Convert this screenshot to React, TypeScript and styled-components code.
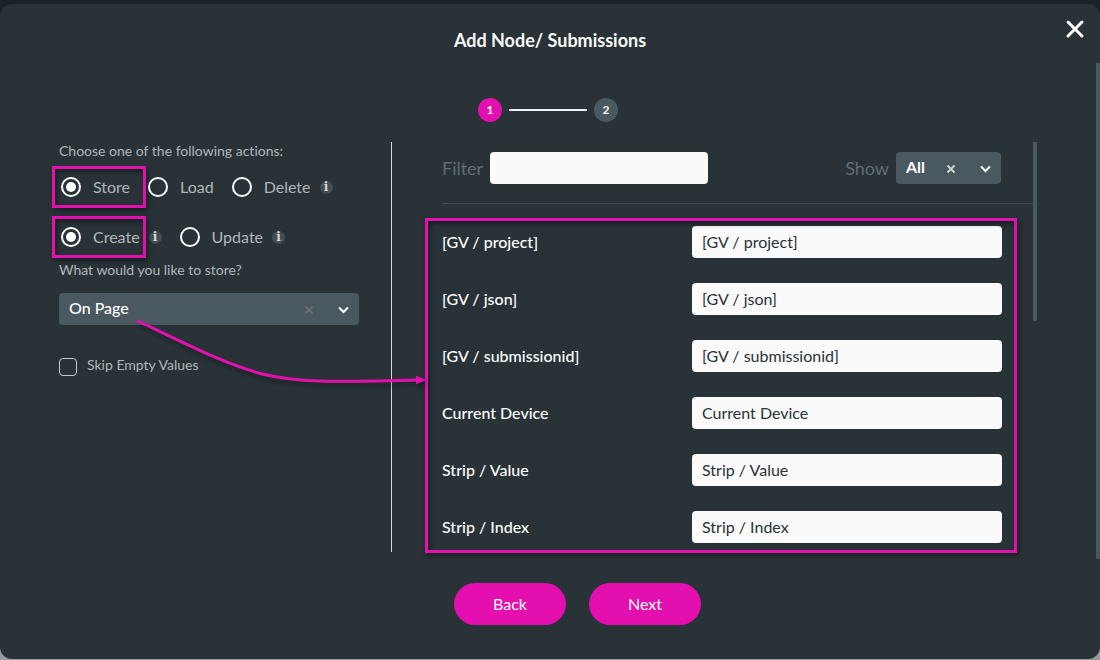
import React, { useState } from "react";
import styled, { createGlobalStyle, css } from "styled-components";

const pink = "#e310af";
const slate = "#4a585f";

const GlobalStyle = createGlobalStyle`
  *, *::before, *::after { box-sizing: border-box; }
  body {
    margin: 0;
    font-family: Lato, "Liberation Sans", sans-serif;
    font-size: 16px;
    line-height: 20px;
    font-variant-ligatures: none;
    background: linear-gradient(#1b2029 50%, #97999b 50%);
  }
  button, input, select { font: inherit; }
`;

const Page = styled.div`
  padding: 4px 0 1px;
`;

const Dialog = styled.main`
  position: relative;
  display: flex;
  flex-direction: column;
  background: #283237;
  border-radius: 12px;
  overflow: hidden;
`;

const Header = styled.header`
  display: flex;
  justify-content: center;
  padding: 24px 0 46px;
`;

const Title = styled.h1`
  margin: 0;
  font-size: 18px;
  line-height: 24px;
  font-weight: 700;
  color: #fafafa;
`;

const CloseButton = styled.button`
  position: absolute;
  top: 14px;
  right: 14px;
  display: flex;
  padding: 0;
  border: 0;
  background: none;
  cursor: pointer;
`;

const OuterScrollbar = styled.div`
  position: absolute;
  top: 59px;
  right: 0;
  width: 4px;
  height: 496px;
  background: ${slate};
`;

const Stepper = styled.ol`
  display: flex;
  justify-content: center;
  align-items: center;
  gap: 7px;
  margin: 0;
  padding: 0 4px 20px 0;
  list-style: none;
`;

const Step = styled.li<{ $active?: boolean }>`
  display: flex;
  justify-content: center;
  align-items: center;
  width: 24px;
  height: 24px;
  border-radius: 50%;
  font-size: 12px;
  font-weight: 700;
  color: #fafafa;
  background: ${(p) => (p.$active ? pink : slate)};
`;

const StepLine = styled.li`
  width: 78px;
  height: 2px;
  background: #f0f0f0;
`;

const Columns = styled.div`
  display: flex;
`;

const highlight = css`
  content: "";
  position: absolute;
  border: 3px solid ${pink};
  pointer-events: none;
  box-shadow: 2px 3px 5px rgba(0, 0, 0, 0.4), inset 2px 3px 5px rgba(0, 0, 0, 0.4);
`;

const ActionsPanel = styled.section`
  position: relative;
  flex: 0 0 392px;
  padding: 0 32px 0 59px;
  border-right: 1px solid #d5d7d8;
  color: #b3b6b8;
`;

const Caption = styled.label`
  display: block;
  margin-bottom: 14px;
  font-size: 14px;
  line-height: 18px;
`;

const RadioGroup = styled.div`
  display: flex;
  align-items: center;
  gap: 18px;
  padding-left: 2px;
`;

const RadioRows = styled.fieldset`
  display: flex;
  flex-direction: column;
  gap: 30px;
  margin: 0 0 14px;
  padding: 0;
  border: 0;

  legend {
    padding: 0;
    margin-bottom: 17px;
    font-size: 14px;
    line-height: 18px;
  }
`;

const RadioItem = styled.div`
  display: flex;
  align-items: center;
  gap: 9px;
`;

const RadioLabel = styled.label<{ $marked?: boolean }>`
  position: relative;
  display: flex;
  align-items: center;
  gap: 12px;

  ${(p) =>
    p.$marked &&
    css`
      &::after {
        ${highlight}
        top: -11px;
        left: -9px;
        width: 94px;
        height: 42px;
      }
    `}
`;

const Radio = styled.input`
  appearance: none;
  display: grid;
  place-items: center;
  width: 20px;
  height: 20px;
  margin: 0;
  border: 2px solid #fff;
  border-radius: 50%;

  &:checked::before {
    content: "";
    width: 10px;
    height: 10px;
    border-radius: 50%;
    background: #fff;
  }
`;

const InfoBadge = styled.span`
  display: flex;
  justify-content: center;
  align-items: center;
  width: 13px;
  height: 13px;
  border-radius: 50%;
  background: #444e53;
  color: #d5d7d8;
  font: 700 12px/12px "DejaVu Serif", serif;
`;

const SelectBox = styled.div<{ $compact?: boolean }>`
  position: relative;
  width: ${(p) => (p.$compact ? "105px" : "300px")};
`;

const Select = styled.select<{ $strong?: boolean }>`
  appearance: none;
  display: block;
  width: 100%;
  height: 32px;
  padding: 0 70px 2px 10px;
  border: 0;
  border-radius: 4px;
  background: ${slate};
  color: #fff;
  font-weight: ${(p) => (p.$strong ? 700 : 500)};
`;

const SelectIcons = styled.span`
  position: absolute;
  top: 0;
  right: 10px;
  display: flex;
  align-items: center;
  gap: 24px;
  height: 34px;
  pointer-events: none;
`;

const CheckLabel = styled.label`
  display: flex;
  gap: 10px;
  margin-top: 31px;
  font-size: 14px;
  line-height: 18px;
`;

const Checkbox = styled.input`
  appearance: none;
  width: 18px;
  height: 18px;
  margin: 2px 0 0;
  border: 1px solid #c6c9ca;
  border-radius: 4px;

  &:checked {
    background: ${pink};
  }
`;

const Arrow = styled.svg`
  position: absolute;
  top: 0;
  left: 0;
  z-index: 1;
  overflow: visible;
  pointer-events: none;
  filter: drop-shadow(2px 4px 2px rgba(0, 0, 0, 0.35));
`;

const MappingPanel = styled.section`
  position: relative;
  flex: 1;
  display: flex;
  margin-right: 63px;
  padding-left: 50px;
`;

const MappingContent = styled.div`
  flex: 1;
`;

const InnerScrollbar = styled.div`
  width: 4px;
  height: 179px;
  background: ${slate};
`;

const Toolbar = styled.div`
  display: flex;
  justify-content: space-between;
  padding: 10px 32px 19px 0;
  border-bottom: 1px solid #434e53;
`;

const Field = styled.div`
  display: flex;
  align-items: center;
  gap: 7px;
`;

const FieldLabel = styled.label`
  font-size: 18px;
  line-height: 24px;
  color: #626c71;
`;

const TextInput = styled.input`
  width: 310px;
  height: 32px;
  padding: 0 10px 2px;
  border: 0;
  border-radius: 4px;
  background: #fafafa;
  color: #283237;
`;

const FilterInput = styled(TextInput)`
  width: 218px;
`;

const Rows = styled.div`
  position: relative;
  display: flex;
  flex-direction: column;
  gap: 25px;
  padding: 22px 31px 9px 0;

  &::after {
    ${highlight}
    inset: 14px 16px -1px -17px;
  }
`;

const Row = styled.div`
  display: flex;
  justify-content: space-between;
  align-items: center;
`;

const RowLabel = styled.label`
  color: #fff;
  font-weight: 500;
`;

const Footer = styled.footer`
  display: flex;
  justify-content: center;
  gap: 23px;
  padding: 31px 0 34px 55px;
`;

const PillButton = styled.button`
  width: 112px;
  height: 42px;
  border: 0;
  border-radius: 21px;
  background: ${pink};
  color: #fff;
  cursor: pointer;
`;

const Cross = ({ color }: { color: string }) => (
  <svg width="10" height="10" viewBox="0 0 10 10" fill="none" stroke={color} strokeWidth="2">
    <path d="M1.500 1.500l7 7M8.500 1.500l-7 7" />
  </svg>
);

const Chevron = () => (
  <svg width="11" height="8" viewBox="0 0 11 8" fill="none" stroke="#fff" strokeWidth="2">
    <path d="M1 1.500l4.500 4.500L10 1.500" />
  </svg>
);

type Option = { name: string; info?: boolean };

const actions: Option[] = [{ name: "Store" }, { name: "Load" }, { name: "Delete", info: true }];
const modes: Option[] = [
  { name: "Create", info: true },
  { name: "Update", info: true },
];
const fields = [
  "[GV / project]",
  "[GV / json]",
  "[GV / submissionid]",
  "Current Device",
  "Strip / Value",
  "Strip / Index",
];

function Radios({ group, options }: { group: string; options: Option[] }) {
  const [value, setValue] = useState(options[0].name);
  return (
    <RadioGroup role="radiogroup" aria-label={group}>
      {options.map((o, i) => (
        <RadioItem key={o.name}>
          <RadioLabel $marked={i === 0}>
            <Radio
              type="radio"
              name={group}
              checked={value === o.name}
              onChange={() => setValue(o.name)}
            />
            {o.name}
          </RadioLabel>
          {o.info && <InfoBadge>i</InfoBadge>}
        </RadioItem>
      ))}
    </RadioGroup>
  );
}

export default function App() {
  return (
    <Page>
      <GlobalStyle />
      <Dialog>
        <Header>
          <Title>Add Node/ Submissions</Title>
        </Header>
        <CloseButton type="button" aria-label="Close">
          <svg width="22" height="22" viewBox="0 0 22 22" fill="none" stroke="#fff" strokeWidth="3" strokeLinecap="round">
            <path d="M4 4l14 14M18 4L4 18" />
          </svg>
        </CloseButton>

        <Stepper>
          <Step $active>1</Step>
          <StepLine aria-hidden />
          <Step>2</Step>
        </Stepper>

        <Columns>
          <ActionsPanel>
            <RadioRows>
              <legend>Choose one of the following actions:</legend>
              <Radios group="action" options={actions} />
              <Radios group="mode" options={modes} />
            </RadioRows>
            <Caption htmlFor="source">What would you like to store?</Caption>
            <SelectBox>
              <Select id="source" defaultValue="On Page">
                <option>On Page</option>
              </Select>
              <SelectIcons>
                <Cross color="#6b6f71" />
                <Chevron />
              </SelectIcons>
            </SelectBox>
            <CheckLabel>
              <Checkbox type="checkbox" />
              Skip Empty Values
            </CheckLabel>
            <Arrow width="428" height="260" aria-hidden>
              <path
                d="M138 179C190 204 225 222 262 232C300 241 330 240 417 238"
                fill="none"
                stroke={pink}
                strokeWidth="3"
                strokeLinecap="round"
              />
              <path d="M416 233.500L426 238L416 242.500Z" fill={pink} />
            </Arrow>
          </ActionsPanel>

          <MappingPanel>
            <MappingContent>
              <Toolbar>
                <Field>
                  <FieldLabel htmlFor="filter">Filter</FieldLabel>
                  <FilterInput id="filter" type="text" />
                </Field>
                <Field>
                  <FieldLabel htmlFor="show">Show</FieldLabel>
                  <SelectBox $compact>
                    <Select id="show" defaultValue="All" $strong>
                      <option>All</option>
                    </Select>
                    <SelectIcons>
                      <Cross color="#d0d3d4" />
                      <Chevron />
                    </SelectIcons>
                  </SelectBox>
                </Field>
              </Toolbar>
              <Rows>
                {fields.map((f, i) => (
                  <Row key={f}>
                    <RowLabel htmlFor={`field-${i}`}>{f}</RowLabel>
                    <TextInput id={`field-${i}`} type="text" defaultValue={f} />
                  </Row>
                ))}
              </Rows>
            </MappingContent>
            <InnerScrollbar />
          </MappingPanel>
        </Columns>

        <Footer>
          <PillButton type="button">Back</PillButton>
          <PillButton type="button">Next</PillButton>
        </Footer>
        <OuterScrollbar />
      </Dialog>
    </Page>
  );
}
